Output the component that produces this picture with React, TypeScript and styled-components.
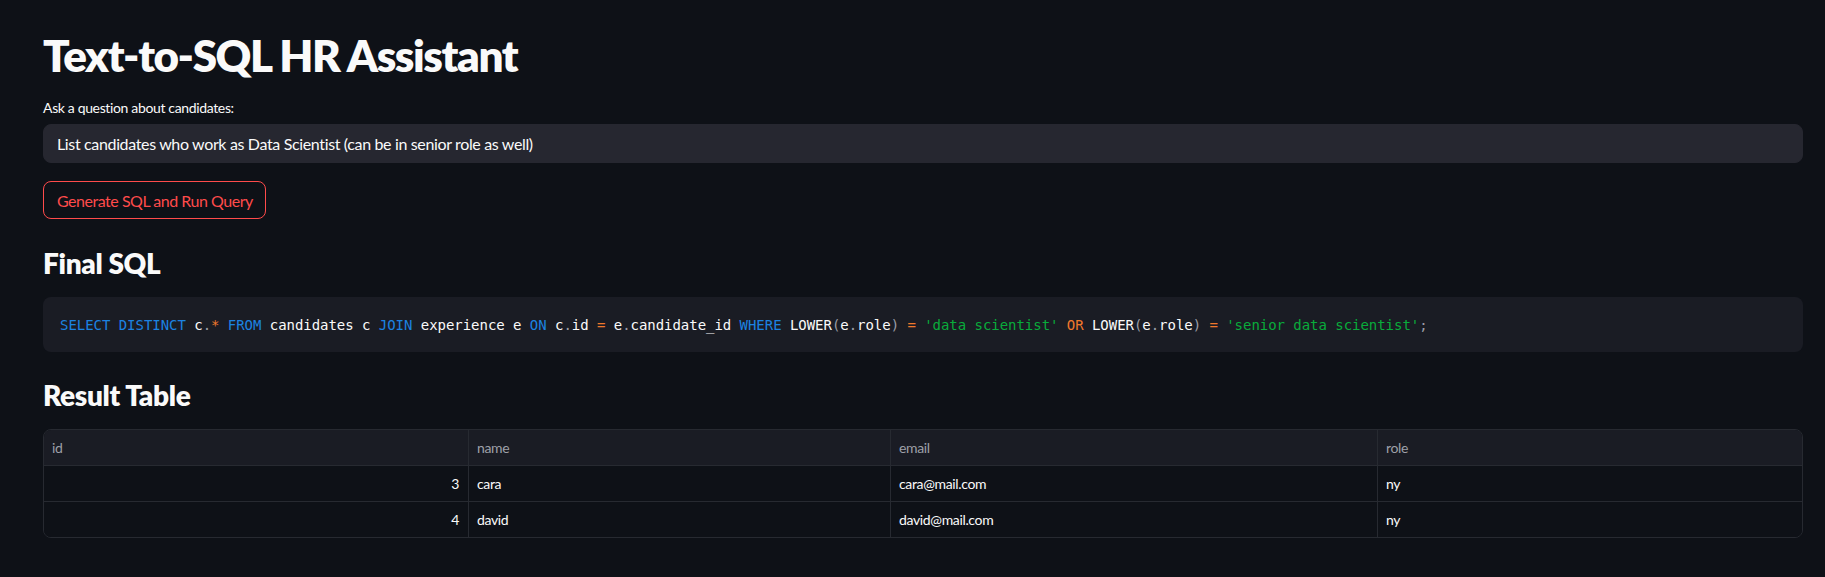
import React from 'react';
import styled, { createGlobalStyle } from 'styled-components';

// style
const GlobalStyle = createGlobalStyle`
  html, body {
    margin: 0;
    padding: 0;
    background: #0e1117;
  }
  body {
    font-family: Lato, "Noto Sans", sans-serif;
    letter-spacing: -0.022em;
    color: #fafafa;
    -webkit-font-smoothing: antialiased;
  }
`;

const Page = styled.main`
  min-height: 577px;
  box-sizing: border-box;
  padding: 29px 22px 40px 43px;
  background: #0e1117;
`;

const Title = styled.h1`
  margin: 0;
  font-size: 44px;
  line-height: 53px;
  font-weight: 800;
  letter-spacing: -0.032em;
  color: #fafafa;
`;

const Label = styled.label`
  display: block;
  margin-top: 16px;
  font-size: 14px;
  line-height: 20px;
  color: #fafafa;
`;

const Input = styled.input`
  display: block;
  box-sizing: border-box;
  width: 100%;
  height: 39px;
  margin-top: 6px;
  padding: 0 13px;
  border: 1px solid #262730;
  border-radius: 8px;
  background: #262730;
  color: #fafafa;
  font-family: inherit;
  font-size: 16px;
  letter-spacing: inherit;
  outline: none;
`;

const RunButton = styled.button`
  display: inline-flex;
  align-items: center;
  box-sizing: border-box;
  height: 38px;
  margin-top: 18px;
  padding: 0 12px 0 13px;
  border: 1px solid #ff4b4b;
  border-radius: 8px;
  background: #0e1117;
  color: #ff4b4b;
  font-family: inherit;
  font-size: 16px;
  letter-spacing: -0.03em;
  cursor: pointer;
`;

const SectionTitle = styled.h3<{ $gap: number }>`
  margin: ${(p) => p.$gap}px 0 0;
  font-size: 28px;
  line-height: 34px;
  font-weight: 800;
  color: #fafafa;
`;

const CodeBlock = styled.pre`
  box-sizing: border-box;
  height: 55px;
  margin: 17px 0 0;
  padding: 0 17px;
  display: flex;
  align-items: center;
  border-radius: 8px;
  background: #1a1c24;
  font-family: "DejaVu Sans Mono", "Liberation Mono", monospace;
  font-size: 14px;
  line-height: 20px;
  letter-spacing: -0.04px;
  color: #fafafa;
  white-space: pre;
  overflow: hidden;
`;

type TokenKind = 'kw' | 'op' | 'str' | 'punc' | 'plain';

const tokenColors: Record<TokenKind, string> = {
  kw: '#1c83e1',
  op: '#f0782c',
  str: '#09ab3b',
  punc: '#9a9da6',
  plain: '#fafafa',
};

const Token = styled.span<{ $kind: TokenKind }>`
  color: ${(p) => tokenColors[p.$kind]};
`;

const Table = styled.div`
  margin-top: 17px;
  border: 1px solid #272a31;
  border-radius: 8px;
  overflow: hidden;
  font-size: 14px;
`;

const Row = styled.div<{ $header?: boolean }>`
  display: grid;
  grid-template-columns: 424px 422px 487px 1fr;
  height: 35px;
  background: ${(p) => (p.$header ? '#1a1c24' : '#0e1117')};
  color: ${(p) => (p.$header ? '#9ea0a8' : '#fafafa')};
  & + & {
    border-top: 1px solid #272a31;
  }
`;

const Cell = styled.div<{ $align?: 'left' | 'right' }>`
  display: flex;
  align-items: center;
  justify-content: ${(p) => (p.$align === 'right' ? 'flex-end' : 'flex-start')};
  padding: 0 9px 0 8px;
  & + & {
    border-left: 1px solid #272a31;
  }
`;

// data
const sqlTokens: [string, TokenKind][] = [
  ['SELECT', 'kw'], [' ', 'plain'], ['DISTINCT', 'kw'], [' c', 'plain'], ['.', 'punc'], ['*', 'op'],
  [' ', 'plain'], ['FROM', 'kw'], [' candidates c ', 'plain'], ['JOIN', 'kw'], [' experience e ', 'plain'],
  ['ON', 'kw'], [' c', 'plain'], ['.', 'punc'], ['id ', 'plain'], ['=', 'op'], [' e', 'plain'], ['.', 'punc'],
  ['candidate_id ', 'plain'], ['WHERE', 'kw'], [' LOWER', 'plain'], ['(', 'punc'], ['e', 'plain'], ['.', 'punc'],
  ['role', 'plain'], [')', 'punc'], [' ', 'plain'], ['=', 'op'], [' ', 'plain'], ["'data scientist'", 'str'],
  [' ', 'plain'], ['OR', 'op'], [' LOWER', 'plain'], ['(', 'punc'], ['e', 'plain'], ['.', 'punc'], ['role', 'plain'],
  [')', 'punc'], [' ', 'plain'], ['=', 'op'], [' ', 'plain'], ["'senior data scientist'", 'str'], [';', 'punc'],
];

const columns = ['id', 'name', 'email', 'role'];

const rows = [
  { id: 3, name: 'cara', email: 'cara@mail.com', role: 'ny' },
  { id: 4, name: 'david', email: 'david@mail.com', role: 'ny' },
];

export default function App() {
  return (
    <Page>
      <GlobalStyle />
      <Title>Text-to-SQL HR Assistant</Title>

      <Label htmlFor="question">Ask a question about candidates:</Label>
      <Input
        id="question"
        readOnly
        value="List candidates who work as Data Scientist (can be in senior role as well)"
      />

      <RunButton>Generate SQL and Run Query</RunButton>

      <SectionTitle $gap={27}>Final SQL</SectionTitle>
      <CodeBlock>
        {sqlTokens.map(([text, kind], i) => (
          <Token key={i} $kind={kind}>{text}</Token>
        ))}
      </CodeBlock>

      <SectionTitle $gap={26}>Result Table</SectionTitle>
      <Table>
        <Row $header>
          {columns.map((c) => (
            <Cell key={c}>{c}</Cell>
          ))}
        </Row>
        {rows.map((r) => (
          <Row key={r.id}>
            <Cell $align="right">{r.id}</Cell>
            <Cell>{r.name}</Cell>
            <Cell>{r.email}</Cell>
            <Cell>{r.role}</Cell>
          </Row>
        ))}
      </Table>
    </Page>
  );
}
